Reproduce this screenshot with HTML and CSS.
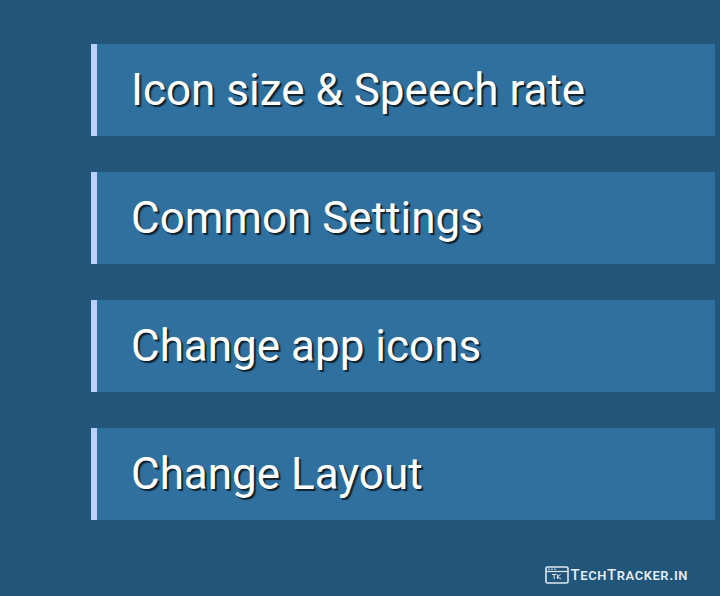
FILE: index.html
```html
<!DOCTYPE html>
<html lang="en">
<head>
  <meta charset="UTF-8">
  <meta name="viewport" content="width=device-width, initial-scale=1.0">
  <title>Settings Menu</title>
  <link rel="stylesheet" href="styles.css">
</head>
<body>
  <ul class="menu">
    <li class="menu-item">Icon size &amp; Speech rate</li>
    <li class="menu-item">Common Settings</li>
    <li class="menu-item">Change app icons</li>
    <li class="menu-item">Change Layout</li>
  </ul>

  <!-- Watermark -->
  <div class="brand">
    <svg class="brand-icon" width="24" height="18" viewBox="0 0 24 18" fill="none">
      <rect x="1" y="1" width="22" height="16" rx="1.5" stroke="#dfe8f0" stroke-width="1.6"/>
      <path d="M1 5.5H23" stroke="#dfe8f0" stroke-width="1.2"/>
      <path d="M3 3.2H5M6 3.2H8M9 3.2H11" stroke="#dfe8f0" stroke-width="1"/>
      <path d="M7 8.5H11.5M9.2 8.5V13M12.5 8.5V13M12.5 10.8L15.5 8.5M12.5 10.8L16 13" stroke="#dfe8f0" stroke-width="1"/>
    </svg>
    <span class="brand-name">TechTracker.in</span>
  </div>
</body>
</html>
```

FILE: styles.css
```css
html, body {
  height: 100%;
}

body {
  margin: 0;
  box-sizing: border-box;
  height: 596px;
  overflow: hidden;
  background-color: #215579;
  font-family: Roboto, "Liberation Sans", sans-serif;
  display: flex;
  flex-direction: column;
}

.menu {
  list-style: none;
  margin: 0;
  padding: 44px 5px 0 91px;
  display: flex;
  flex-direction: column;
  gap: 36px;
}

.menu-item {
  height: 92px;
  line-height: 92px;
  box-sizing: border-box;
  padding-left: 34px;
  border-left: 6px solid #b9d3f8;
  background-color: #30709f;
  color: #fff;
  font-size: 44px;
  text-shadow: 2px 2px 1px #10222e;
}

.brand {
  margin-top: auto;
  padding: 0 32px 12px 0;
  display: flex;
  justify-content: flex-end;
  align-items: center;
  gap: 2px;
}

.brand-name {
  color: #e4ecf2;
  font-family: Roboto, sans-serif;
  font-size: 15px;
  font-weight: 500;
  font-variant: small-caps;
  letter-spacing: 0.6px;
}
```
